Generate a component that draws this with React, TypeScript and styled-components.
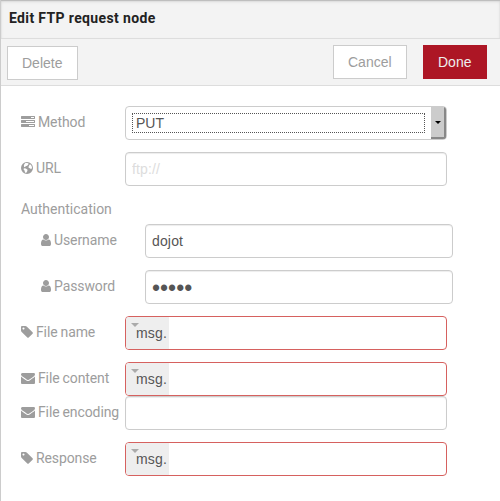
import React from "react";
import styled, { createGlobalStyle, css } from "styled-components";

const GlobalStyle = createGlobalStyle`
  * { box-sizing: border-box; }
  body { margin: 0; background: #fff; overflow: hidden; }
`;

const Tray = styled.main`
  width: 500px;
  height: 501px;
  border-left: 1px solid #ccc;
  background: #fff;
  color: #9d9d9d;
  font: 14px/20px Roboto, sans-serif;
`;

const Header = styled.h1`
  height: 39px;
  margin: 0;
  padding: 8px 8px 0;
  border-bottom: 1px solid #ddd;
  background: #f3f3f3;
  box-shadow: inset 0 1px 1px #bbb, inset 0 2px 3px #ddd;
  color: #222;
  font-size: 14px;
  line-height: 20px;
  font-weight: 700;
  letter-spacing: 0.36px;
`;

const Toolbar = styled.div`
  display: flex;
  align-items: flex-start;
  height: 47px;
  padding: 6px 13px 0 6px;
  border-bottom: 1px solid #ddd;
  background: #f3f3f3;
`;

const Actions = styled.div`
  display: flex;
  gap: 16px;
  margin-left: auto;
`;

const Button = styled.button<{ $width: number; $primary?: boolean; $low?: boolean }>`
  width: ${(p) => p.$width}px;
  height: 34px;
  margin: ${(p) => (p.$low ? "1px" : "0")} 0 0;
  padding: 0 0 0 14px;
  border: 1px solid ${(p) => (p.$primary ? "#ad1625" : "#ccc")};
  background: ${(p) => (p.$primary ? "#ad1625" : "#fff")};
  color: ${(p) => (p.$primary ? "#eee" : "#9d9d9d")};
  font: 14px/20px "Liberation Sans", Arial, sans-serif;
  text-align: left;
`;

const Form = styled.form`
  display: flex;
  flex-direction: column;
  padding: 20px 0 0 20px;
`;

const Row = styled.div<{ $nested?: boolean; $tight?: boolean }>`
  display: flex;
  height: 34px;
  margin-bottom: ${(p) => (p.$tight ? 0 : 12)}px;
  padding-left: ${(p) => (p.$nested ? 20 : 0)}px;
`;

const Label = styled.label`
  flex: none;
  width: 104px;
  padding-top: 6px;
  letter-spacing: -0.1px;
  word-spacing: -0.4px;
  white-space: nowrap;
`;

const SectionLabel = styled.div`
  height: 20px;
  margin: 1px 0 5px;
`;

const Glyph = styled.svg`
  height: 14px;
  vertical-align: -2px;
  fill: currentColor;
`;

const fieldFrame = css`
  height: 34px;
  border: 1px solid #ccc;
  border-radius: 4px;
  background: #fff;
  color: #555;
  font: 14px/20px "Liberation Sans", Arial, sans-serif;
`;

const Input = styled.input<{ $wide?: boolean }>`
  ${fieldFrame}
  width: ${(p) => (p.$wide ? 308 : 322)}px;
  padding: 0 6px;
  box-shadow: inset 0 1px 1px rgba(0, 0, 0, 0.075);
  letter-spacing: 0.15px;
  outline: none;
  &::placeholder { color: #ddd; opacity: 1; }
  &[type="password"] { font-size: 23px; letter-spacing: 0; padding-top: 2px; }
`;

const Select = styled.div`
  ${fieldFrame}
  display: flex;
  width: 322px;
  padding-left: 6px;
  overflow: hidden;
`;

const SelectValue = styled.span`
  flex: 1;
  height: 20px;
  margin: 6px 6px 0 0;
  padding-left: 3px;
  border: 1px dotted #555;
  line-height: 18px;
`;

const SelectArrow = styled.span`
  display: flex;
  align-items: center;
  justify-content: center;
  width: 15px;
  border-right: 2px solid #888;
  border-bottom: 2px solid #888;
  background: #ccc;
  &::before {
    content: "";
    border: 3px solid transparent;
    border-top: 3px solid #000;
    border-bottom: 0;
  }
`;

const TypedInput = styled.div`
  ${fieldFrame}
  display: flex;
  width: 322px;
  border-color: #d6615f;
  overflow: hidden;
`;

const TypeButton = styled.span`
  display: flex;
  width: 43px;
  background: #eee;
  letter-spacing: 0.15px;
  line-height: 33px;
  &::before {
    content: "";
    width: 0;
    height: 0;
    margin: 6px -3px 0 5px;
    border: 4px solid transparent;
    border-top-color: #aaa;
    border-bottom: 0;
  }
`;

const glyphs = {
  tasks: {
    box: "0 0 1792 1792",
    width: 14,
    d: "M1024 1408h640v-128h-640v128zm-384-512h1024v-128h-1024v128zm640-512h384v-128h-384v128zm512 832v256q0 26-19 45t-45 19h-1664q-26 0-45-19t-19-45v-256q0-26 19-45t45-19h1664q26 0 45 19t19 45zm0-512v256q0 26-19 45t-45 19h-1664q-26 0-45-19t-19-45v-256q0-26 19-45t45-19h1664q26 0 45 19t19 45zm0-512v256q0 26-19 45t-45 19h-1664q-26 0-45-19t-19-45v-256q0-26 19-45t45-19h1664q26 0 45 19t19 45z",
  },
  globe: {
    box: "0 0 1536 1792",
    width: 12,
    d: "M768 128a768 768 0 1 0 0 1536a768 768 0 1 0 0-1536zM560 260l260-20 170 100-80 150-130 110-190 80-90 120-110-60-20-200 70-170zM1060 480l170-40 130 200 50 270-130 130-130-120-150-30-50-140 80-120zM380 920l240 40 220 160-40 190-150 210-140-60-60-230-130-160z",
  },
  user: {
    box: "256 0 1280 1792",
    width: 10,
    d: "M1536 1399q0 109-62.5 187t-150.5 78h-854q-88 0-150.5-78t-62.5-187q0-85 8.5-160.5t31.5-152 58.5-131 94-89 134.5-34.5q131 128 313 128t313-128q76 0 134.5 34.5t94 89 58.5 131 31.5 152 8.5 160.5zm-256-887q0 159-112.5 271.5t-271.5 112.5-271.5-112.5-112.5-271.5 112.5-271.5 271.5-112.5 271.5 112.5 112.5 271.5z",
  },
  tag: {
    box: "128 0 1536 1792",
    width: 12,
    d: "M576 448q0-53-37.5-90.5t-90.5-37.5-90.5 37.5-37.5 90.5 37.5 90.5 90.5 37.5 90.5-37.5 37.5-90.5zm1067 576q0 53-37 90l-491 492q-39 37-91 37-53 0-90-37l-715-716q-38-37-64.5-101t-26.5-117v-416q0-52 38-90t90-38h416q53 0 117 26.5t102 64.5l715 714q37 39 37 91z",
  },
  envelope: {
    box: "0 0 1792 1792",
    width: 14,
    d: "M1792 710v794q0 66-47 113t-113 47h-1472q-66 0-113-47t-47-113v-794q44 49 101 87 362 246 497 345 57 42 92.5 65.5t94.5 48 110 24.5h2q51 0 110-24.5t94.5-48 92.5-65.5q170-123 498-345 57-39 100-87zm0-294q0 79-49 151t-122 123q-376 261-468 325-10 7-42.5 31t-54 38.5-52 32.5-57.5 27-50 9h-2q-23 0-50-9t-57.5-27-52-32.5-54-38.5-42.5-31q-91-64-262-182.5t-205-142.5q-62-42-117-115.5t-55-136.5q0-78 41.5-130t118.5-52h1472q65 0 112.5 47t47.5 113z",
  },
};

function FieldLabel({ icon, text }: { icon: keyof typeof glyphs; text: string }) {
  const g = glyphs[icon];
  return (
    <Label>
      <Glyph viewBox={g.box} width={g.width}>
        <path fillRule="evenodd" d={g.d} />
      </Glyph>{" "}
      {text}
    </Label>
  );
}

function MessageField() {
  return (
    <TypedInput>
      <TypeButton>msg.</TypeButton>
    </TypedInput>
  );
}

export default function App() {
  return (
    <>
      <GlobalStyle />
      <Tray>
        <Header>Edit FTP request node</Header>
        <Toolbar>
          <Button $width={71} $low>Delete</Button>
          <Actions>
            <Button $width={74}>Cancel</Button>
            <Button $width={64} $primary>Done</Button>
          </Actions>
        </Toolbar>
        <Form>
          <Row>
            <FieldLabel icon="tasks" text="Method" />
            <Select>
              <SelectValue>PUT</SelectValue>
              <SelectArrow />
            </Select>
          </Row>
          <Row>
            <FieldLabel icon="globe" text="URL" />
            <Input placeholder="ftp://" />
          </Row>
          <SectionLabel>Authentication</SectionLabel>
          <Row $nested>
            <FieldLabel icon="user" text="Username" />
            <Input $wide defaultValue="dojot" />
          </Row>
          <Row $nested>
            <FieldLabel icon="user" text="Password" />
            <Input $wide type="password" defaultValue="dojot" />
          </Row>
          <Row>
            <FieldLabel icon="tag" text="File name" />
            <MessageField />
          </Row>
          <Row $tight>
            <FieldLabel icon="envelope" text="File content" />
            <MessageField />
          </Row>
          <Row>
            <FieldLabel icon="envelope" text="File encoding" />
            <Input />
          </Row>
          <Row>
            <FieldLabel icon="tag" text="Response" />
            <MessageField />
          </Row>
        </Form>
      </Tray>
    </>
  );
}
